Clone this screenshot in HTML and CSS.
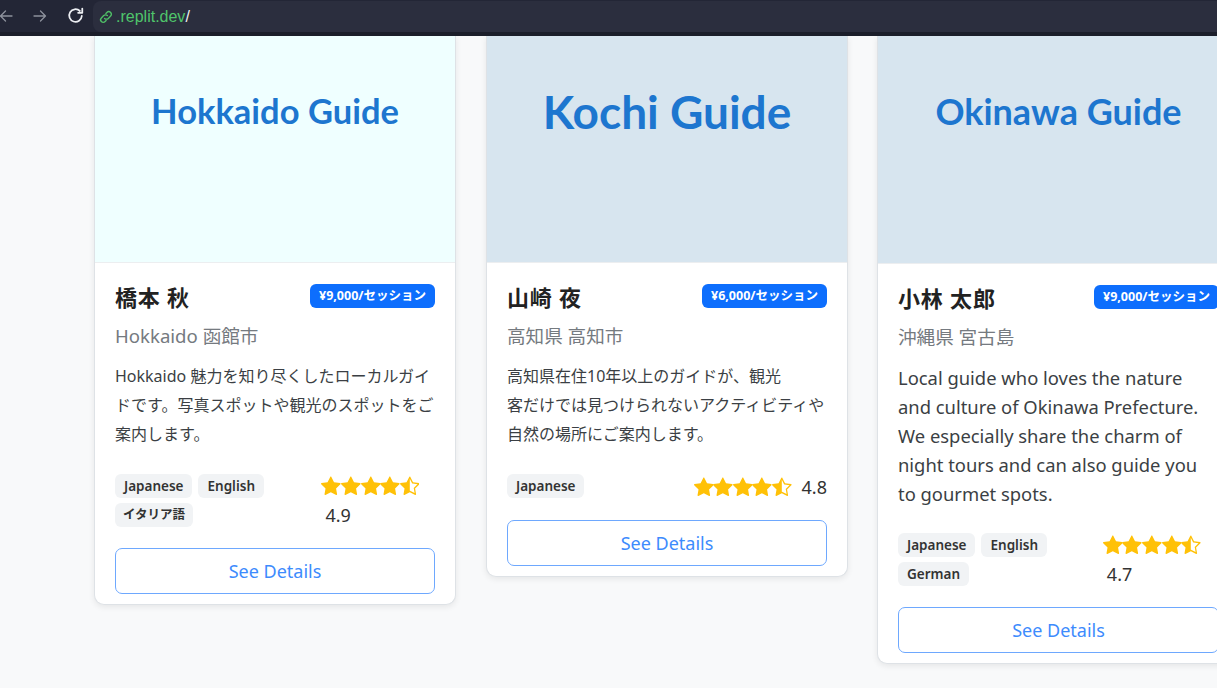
FILE: index.html
```html
<!DOCTYPE html>
<html lang="ja">
<head>
<meta charset="utf-8">
<title>Guides</title>
<link rel="stylesheet" href="styles.css">
</head>
<body>
<div class="chrome">
  <div class="nav-btns">
    <svg class="nav-icon dim" viewBox="0 0 16 16" width="16" height="16"><path d="M14 8H2.5M7.5 3 2.5 8l5 5" fill="none" stroke="currentColor" stroke-width="1.3" stroke-linecap="round" stroke-linejoin="round"/></svg>
    <svg class="nav-icon dim" viewBox="0 0 16 16" width="16" height="16"><path d="M2 8h11.5M8.5 3l5 5-5 5" fill="none" stroke="currentColor" stroke-width="1.3" stroke-linecap="round" stroke-linejoin="round"/></svg>
    <svg class="nav-icon" viewBox="0 0 16 16" width="19" height="19"><path d="M13.3 8.4A5.3 5.3 0 1 1 11.7 4.2" fill="none" stroke="currentColor" stroke-width="1.5" stroke-linecap="round"/><path d="M13.7 2.2v3.5h-3.5" fill="none" stroke="currentColor" stroke-width="1.5" stroke-linecap="round" stroke-linejoin="round"/></svg>
  </div>
  <div class="omnibox">
    <svg class="link-icon" viewBox="0 0 16 16" width="16" height="16"><path d="M6.6 9.4a2.6 2.6 0 0 0 3.7 0l2.3-2.3a2.6 2.6 0 0 0-3.7-3.7l-1 1" fill="none" stroke="currentColor" stroke-width="1.4" stroke-linecap="round"/><path d="M9.4 6.6a2.6 2.6 0 0 0-3.7 0L3.4 8.9a2.6 2.6 0 0 0 3.7 3.7l1-1" fill="none" stroke="currentColor" stroke-width="1.4" stroke-linecap="round"/></svg>
    <span class="url">.replit.dev</span><span class="url-slash">/</span>
  </div>
</div>

<main class="page">
  <div class="cards">

    <article class="card">
      <div class="card-img img-light"><span class="img-title t-hok">Hokkaido Guide</span></div>
      <div class="card-body">
        <div class="head">
          <h5 class="name">橋本 秋</h5>
          <span class="price">¥9,000/セッション</span>
        </div>
        <p class="loc">Hokkaido 函館市</p>
        <p class="desc ja">Hokkaido 魅力を知り尽くしたローカルガイ<br>ドです。写真スポットや観光のスポットをご<br>案内します。</p>
        <div class="meta">
          <div class="langs">
            <span class="lang">Japanese</span><span class="lang">English</span><span class="lang lang-ja">イタリア語</span>
          </div>
          <div class="rating">
            <span class="stars">
              <svg viewBox="0 0 16 16"><path d="M3.612 15.443c-.386.198-.824-.149-.746-.592l.83-4.73L.173 6.765c-.329-.314-.158-.888.283-.95l4.898-.696L7.538.792c.197-.39.73-.39.927 0l2.184 4.327 4.898.696c.441.062.612.636.282.95l-3.522 3.356.83 4.73c.078.443-.36.79-.746.592L8 13.187l-4.389 2.256z"/></svg>
              <svg viewBox="0 0 16 16"><path d="M3.612 15.443c-.386.198-.824-.149-.746-.592l.83-4.73L.173 6.765c-.329-.314-.158-.888.283-.95l4.898-.696L7.538.792c.197-.39.73-.39.927 0l2.184 4.327 4.898.696c.441.062.612.636.282.95l-3.522 3.356.83 4.73c.078.443-.36.79-.746.592L8 13.187l-4.389 2.256z"/></svg>
              <svg viewBox="0 0 16 16"><path d="M3.612 15.443c-.386.198-.824-.149-.746-.592l.83-4.73L.173 6.765c-.329-.314-.158-.888.283-.95l4.898-.696L7.538.792c.197-.39.73-.39.927 0l2.184 4.327 4.898.696c.441.062.612.636.282.95l-3.522 3.356.83 4.73c.078.443-.36.79-.746.592L8 13.187l-4.389 2.256z"/></svg>
              <svg viewBox="0 0 16 16"><path d="M3.612 15.443c-.386.198-.824-.149-.746-.592l.83-4.73L.173 6.765c-.329-.314-.158-.888.283-.95l4.898-.696L7.538.792c.197-.39.73-.39.927 0l2.184 4.327 4.898.696c.441.062.612.636.282.95l-3.522 3.356.83 4.73c.078.443-.36.79-.746.592L8 13.187l-4.389 2.256z"/></svg>
              <svg viewBox="0 0 16 16"><path d="M5.354 5.119 7.538.792A.52.52 0 0 1 8 .5c.183 0 .366.097.465.292l2.184 4.327 4.898.696A.54.54 0 0 1 16 6.32a.55.55 0 0 1-.17.445l-3.523 3.356.83 4.730c.078.443-.36.79-.746.592L8 13.187l-4.389 2.256a.5.5 0 0 1-.146.05c-.342.06-.668-.254-.6-.642l.83-4.73L.173 6.765a.55.55 0 0 1-.172-.403.6.6 0 0 1 .085-.302.51.51 0 0 1 .37-.245zM8 12.027a.5.5 0 0 1 .232.056l3.686 1.894-.694-3.957a.56.56 0 0 1 .162-.505l2.907-2.77-4.052-.576a.53.53 0 0 1-.393-.288L8.001 2.223 8 2.226z"/></svg>
            </span>
            <span class="score">4.9</span>
          </div>
        </div>
        <button class="btn-details">See Details</button>
      </div>
    </article>

    <article class="card">
      <div class="card-img img-blue"><span class="img-title t-kochi">Kochi Guide</span></div>
      <div class="card-body">
        <div class="head">
          <h5 class="name">山崎 夜</h5>
          <span class="price">¥6,000/セッション</span>
        </div>
        <p class="loc">高知県 高知市</p>
        <p class="desc ja">高知県在住10年以上のガイドが、観光<br>客だけでは見つけられないアクティビティや<br>自然の場所にご案内します。</p>
        <div class="meta">
          <div class="langs">
            <span class="lang">Japanese</span>
          </div>
          <div class="rating">
            <span class="stars">
              <svg viewBox="0 0 16 16"><path d="M3.612 15.443c-.386.198-.824-.149-.746-.592l.83-4.73L.173 6.765c-.329-.314-.158-.888.283-.95l4.898-.696L7.538.792c.197-.39.73-.39.927 0l2.184 4.327 4.898.696c.441.062.612.636.282.95l-3.522 3.356.83 4.73c.078.443-.36.79-.746.592L8 13.187l-4.389 2.256z"/></svg>
              <svg viewBox="0 0 16 16"><path d="M3.612 15.443c-.386.198-.824-.149-.746-.592l.83-4.73L.173 6.765c-.329-.314-.158-.888.283-.95l4.898-.696L7.538.792c.197-.39.73-.39.927 0l2.184 4.327 4.898.696c.441.062.612.636.282.95l-3.522 3.356.83 4.73c.078.443-.36.79-.746.592L8 13.187l-4.389 2.256z"/></svg>
              <svg viewBox="0 0 16 16"><path d="M3.612 15.443c-.386.198-.824-.149-.746-.592l.83-4.73L.173 6.765c-.329-.314-.158-.888.283-.95l4.898-.696L7.538.792c.197-.39.73-.39.927 0l2.184 4.327 4.898.696c.441.062.612.636.282.95l-3.522 3.356.83 4.73c.078.443-.36.79-.746.592L8 13.187l-4.389 2.256z"/></svg>
              <svg viewBox="0 0 16 16"><path d="M3.612 15.443c-.386.198-.824-.149-.746-.592l.83-4.73L.173 6.765c-.329-.314-.158-.888.283-.95l4.898-.696L7.538.792c.197-.39.73-.39.927 0l2.184 4.327 4.898.696c.441.062.612.636.282.95l-3.522 3.356.83 4.73c.078.443-.36.79-.746.592L8 13.187l-4.389 2.256z"/></svg>
              <svg viewBox="0 0 16 16"><path d="M5.354 5.119 7.538.792A.52.52 0 0 1 8 .5c.183 0 .366.097.465.292l2.184 4.327 4.898.696A.54.54 0 0 1 16 6.32a.55.55 0 0 1-.17.445l-3.523 3.356.83 4.73c.078.443-.36.79-.746.592L8 13.187l-4.389 2.256a.5.5 0 0 1-.146.05c-.342.06-.668-.254-.6-.642l.83-4.73L.173 6.765a.55.55 0 0 1-.172-.403.6.6 0 0 1 .085-.302.51.51 0 0 1 .37-.245zM8 12.027a.5.5 0 0 1 .232.056l3.686 1.894-.694-3.957a.56.56 0 0 1 .162-.505l2.907-2.77-4.052-.576a.53.53 0 0 1-.393-.288L8.001 2.223 8 2.226z"/></svg>
            </span>
            <span class="score">4.8</span>
          </div>
        </div>
        <button class="btn-details">See Details</button>
      </div>
    </article>

    <article class="card">
      <div class="card-img img-blue"><span class="img-title t-oki">Okinawa Guide</span></div>
      <div class="card-body">
        <div class="head">
          <h5 class="name">小林 太郎</h5>
          <span class="price">¥9,000/セッション</span>
        </div>
        <p class="loc">沖縄県 宮古島</p>
        <p class="desc en">Local guide who loves the nature and culture of Okinawa Prefecture. We especially share the charm of night tours and can also guide you to gourmet spots.</p>
        <div class="meta">
          <div class="langs">
            <span class="lang">Japanese</span><span class="lang">English</span><span class="lang">German</span>
          </div>
          <div class="rating">
            <span class="stars">
              <svg viewBox="0 0 16 16"><path d="M3.612 15.443c-.386.198-.824-.149-.746-.592l.83-4.73L.173 6.765c-.329-.314-.158-.888.283-.95l4.898-.696L7.538.792c.197-.39.73-.39.927 0l2.184 4.327 4.898.696c.441.062.612.636.282.95l-3.522 3.356.83 4.73c.078.443-.36.79-.746.592L8 13.187l-4.389 2.256z"/></svg>
              <svg viewBox="0 0 16 16"><path d="M3.612 15.443c-.386.198-.824-.149-.746-.592l.83-4.73L.173 6.765c-.329-.314-.158-.888.283-.95l4.898-.696L7.538.792c.197-.39.73-.39.927 0l2.184 4.327 4.898.696c.441.062.612.636.282.95l-3.522 3.356.83 4.73c.078.443-.36.79-.746.592L8 13.187l-4.389 2.256z"/></svg>
              <svg viewBox="0 0 16 16"><path d="M3.612 15.443c-.386.198-.824-.149-.746-.592l.83-4.73L.173 6.765c-.329-.314-.158-.888.283-.95l4.898-.696L7.538.792c.197-.39.73-.39.927 0l2.184 4.327 4.898.696c.441.062.612.636.282.95l-3.522 3.356.83 4.73c.078.443-.36.79-.746.592L8 13.187l-4.389 2.256z"/></svg>
              <svg viewBox="0 0 16 16"><path d="M3.612 15.443c-.386.198-.824-.149-.746-.592l.83-4.73L.173 6.765c-.329-.314-.158-.888.283-.95l4.898-.696L7.538.792c.197-.39.73-.39.927 0l2.184 4.327 4.898.696c.441.062.612.636.282.95l-3.522 3.356.83 4.73c.078.443-.36.79-.746.592L8 13.187l-4.389 2.256z"/></svg>
              <svg viewBox="0 0 16 16"><path d="M5.354 5.119 7.538.792A.52.52 0 0 1 8 .5c.183 0 .366.097.465.292l2.184 4.327 4.898.696A.54.54 0 0 1 16 6.32a.55.55 0 0 1-.17.445l-3.523 3.356.83 4.73c.078.443-.36.79-.746.592L8 13.187l-4.389 2.256a.5.5 0 0 1-.146.05c-.342.06-.668-.254-.6-.642l.83-4.73L.173 6.765a.55.55 0 0 1-.172-.403.6.6 0 0 1 .085-.302.51.51 0 0 1 .37-.245zM8 12.027a.5.5 0 0 1 .232.056l3.686 1.894-.694-3.957a.56.56 0 0 1 .162-.505l2.907-2.77-4.052-.576a.53.53 0 0 1-.393-.288L8.001 2.223 8 2.226z"/></svg>
            </span>
            <span class="score">4.7</span>
          </div>
        </div>
        <button class="btn-details">See Details</button>
      </div>
    </article>

  </div>
</main>
</body>
</html>
```

FILE: styles.css
```css
* { box-sizing: border-box; }

html, body {
  margin: 0;
  padding: 0;
  width: 1217px;
  height: 688px;
  overflow: hidden;
  background: #f8f9fa;
  font-family: "Noto Sans", "Noto Sans CJK JP", sans-serif;
  color: #212529;
}

/* ---------- browser chrome ---------- */
.chrome {
  height: 36px;
  background: #232636;
  display: flex;
  align-items: stretch;
  border-bottom: 4px solid #1b1e2a;
}

.nav-btns {
  display: flex;
  align-items: center;
  gap: 18px;
  width: 95px;
  margin-left: -2px;
  padding-bottom: 1px;
}

.nav-icon {
  color: #eceef2;
  flex: none;
}
.nav-icon.dim { color: #8d919c; }

.omnibox {
  flex: 1;
  margin-top: 1px;
  background: #2b2e3e;
  border-radius: 8px 0 0 8px;
  display: flex;
  align-items: center;
  padding-left: 5px;
  font-family: "Liberation Sans", Arial, sans-serif;
  font-size: 16px;
}

.link-icon { color: #4fbf67; margin-right: 2px; }
.url { color: #4fc56b; }
.url-slash { color: #f0f0f0; }

/* ---------- page ---------- */
.page {
  height: 652px;
  overflow: hidden;
}

.cards {
  display: grid;
  grid-template-columns: 362px 362px 362px;
  column-gap: 30px;
  align-items: start;
  padding-left: 94px;
  width: 1400px;
}
.cards .card:nth-child(3) { margin-left: -1px; }

.card {
  background: #fff;
  border: 1px solid #dee2e6;
  border-top: none;
  border-radius: 0 0 10px 10px;
  box-shadow: 0 2px 6px rgba(0, 0, 0, 0.08);
  overflow: hidden;
}

.card-img {
  height: 227px;
  display: flex;
  justify-content: center;
  padding-top: 55px;
  border-bottom: 1px solid #eceef0;
}
.img-light { background: #efffff; }
.img-blue { background: #d7e5ef; }
.cards .card:nth-child(3) .card-img { height: 228px; }

.img-title {
  font-family: Lato, sans-serif;
  font-weight: 700;
  color: #1d76cf;
  line-height: 1;
  height: 40px;
  display: flex;
  align-items: center;
  white-space: nowrap;
}
.t-hok { font-size: 34.5px; }
.t-kochi { font-size: 46px; padding-top: 2px; }
.t-oki { font-size: 36px; }

.card-body {
  padding: 20px 20px 10px 20px;
}

.head {
  display: flex;
  justify-content: space-between;
  align-items: center;
  height: 26px;
}

.name {
  margin: 0;
  font-size: 22px;
  font-weight: 700;
  color: #222;
  letter-spacing: 0.8px;
}

.price {
  background: #0d6efd;
  color: #fff;
  font-size: 12.5px;
  font-weight: 700;
  border-radius: 6px;
  padding: 0 9px;
  height: 24px;
  line-height: 24px;
  white-space: nowrap;
}

.loc {
  margin: 14px 0 0;
  font-size: 18.6px;
  line-height: 26px;
  color: #757a80;
}

.desc {
  margin: 13px 0 25px;
  line-height: 29px;
  color: #3b3f44;
}
.desc.ja {
  font-size: 16px;
  white-space: nowrap;
}
.desc.en {
  font-size: 18.4px;
}

.meta {
  display: flex;
  justify-content: space-between;
  align-items: flex-start;
  gap: 8px;
}

.langs {
  display: flex;
  flex-wrap: wrap;
  gap: 5px 6px;
}

.lang {
  background: #f1f3f5;
  color: #333;
  font-size: 13.5px;
  font-weight: 600;
  height: 24px;
  line-height: 24px;
  padding: 0 9px;
  border-radius: 6px;
  white-space: nowrap;
}
.lang-ja { font-size: 12.5px; padding: 0 8px; }

.rating {
  display: flex;
  flex-wrap: wrap;
  align-items: center;
  row-gap: 4px;
  min-width: 0;
}

.stars {
  display: flex;
  margin-right: 6px;
  height: 24px;
  align-items: center;
}
.stars svg {
  width: 19.6px;
  height: 19.6px;
  fill: #ffc107;
  flex: none;
}

.score {
  margin-left: 4px;
  font-size: 18px;
  color: #333;
  line-height: 26px;
}

.btn-details {
  display: block;
  width: 100%;
  margin-top: 20px;
  height: 46px;
  background: #fff;
  border: 1.5px solid #6ea8fe;
  border-radius: 7px;
  color: #3d8bfd;
  font-family: "Noto Sans", sans-serif;
  font-size: 18px;
}
```
